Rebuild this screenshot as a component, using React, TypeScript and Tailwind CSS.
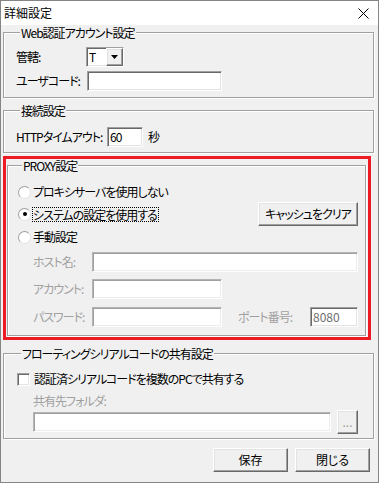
import React from "react"

const font = "[font-family:'Noto_Sans_CJK_JP',sans-serif] [font-feature-settings:'palt'] tracking-[-1px] whitespace-nowrap"

const sunken =
    "shrink-0 bg-white border border-t-[#a0a0a0] border-l-[#a0a0a0] border-b-white border-r-white shadow-[inset_1px_1px_0_#696969,inset_-1px_-1px_0_#e3e3e3]"

const sunkenOff =
    "shrink-0 bg-white border border-t-[#b4b4b4] border-l-[#b4b4b4] border-b-white border-r-white shadow-[inset_1px_1px_0_#a0a0a0,inset_-1px_-1px_0_#ececec]"

const raised =
    "shrink-0 bg-[#f0f0f0] border border-t-white border-l-white border-b-[#696969] border-r-[#696969] shadow-[inset_-1px_-1px_0_#a0a0a0,inset_1px_1px_0_#e3e3e3]"

function GroupBox({ title, className, children }: { title: string; className?: string; children: React.ReactNode }) {
    return (
        <div className={"flex flex-col border border-[#a0a0a0] shadow-[inset_1px_1px_0_#fff,1px_1px_0_#fff] " + (className ?? "")}>
            <span className="-mt-[7px] ml-[4px] w-fit px-[1px] bg-[#f0f0f0] leading-[14px]">{title}</span>
            {children}
        </div>
    )
}

function Radio({ checked }: { checked?: boolean }) {
    return (
        <span className="shrink-0 flex h-[13px] w-[13px] items-center justify-center rounded-full bg-white border border-[#a0a0a0] border-b-[#e3e3e3] border-r-[#e3e3e3]">
            {checked && <span className="h-[4px] w-[4px] rounded-full bg-black" />}
        </span>
    )
}

export default function App() {
    return (
        <div className={"w-[379px] h-[483px] flex flex-col bg-[#f0f0f0] border border-[#858585] text-[12px] text-black " + font}>
            {/* title bar */}
            <div className="h-[24px] flex items-center justify-between bg-white pl-[3px] pr-[9px]">
                <span className="leading-[14px] tracking-normal">詳細設定</span>
                <svg width="11" height="11" viewBox="0 0 11 11">
                    <path d="M0.5 0.5 L10.5 10.5 M10.5 0.5 L0.5 10.5" stroke="#000" strokeWidth="1" />
                </svg>
            </div>

            <div className="flex flex-col pl-[2px]">
                {/* Web auth */}
                <GroupBox title="Web認証アカウント設定" className="mt-[7px] w-[371px] pl-[12px] pb-[6px]">
                    <div className="mt-[7px] flex items-center h-[20px]">
                        <span className="w-[70px] shrink-0">管轄:</span>
                        <div className={"w-[38px] h-[20px] flex items-stretch " + sunken}>
                            <span className="flex-1 pl-[2px] leading-[18px]">T</span>
                            <span className={"w-[17px] flex items-center justify-center " + raised}>
                                <svg width="7" height="4" viewBox="0 0 7 4"><path d="M0 0 H7 L3.5 4 Z" fill="#000" /></svg>
                            </span>
                        </div>
                    </div>
                    <div className="mt-[4px] flex items-center h-[20px]">
                        <span className="w-[71px] shrink-0">ユーザコード:</span>
                        <div className={"w-[135px] h-[20px] " + sunken} />
                    </div>
                </GroupBox>

                {/* connection */}
                <GroupBox title="接続設定" className="mt-[12px] w-[371px] pl-[12px] pb-[5px]">
                    <div className="mt-[9px] flex items-center h-[20px]">
                        <span className="w-[91px] shrink-0">HTTPタイムアウト:</span>
                        <div className={"w-[36px] h-[20px] pl-[2px] leading-[18px] " + sunken}>60</div>
                        <span className="ml-[5px]">秒</span>
                    </div>
                </GroupBox>

                {/* proxy, highlighted */}
                <div className="mt-[3px] w-[368px] border-[3px] border-[#ed1c24] flex flex-col">
                    <GroupBox title="PROXY設定" className="mt-[6px] mb-[1px] ml-[1px] w-[359px] pl-[10px] pr-[7px] pb-[8px]">
                        <div className="mt-[9px] h-[20px] flex items-center gap-[2px]">
                            <Radio />
                            <span>プロキシサーバを使用しない</span>
                        </div>
                        <div className="h-[24px] flex items-center gap-[2px]">
                            <Radio checked />
                            <span className="leading-[13px] pr-[1px] outline outline-1 outline-dotted outline-black">システムの設定を使用する</span>
                            <button className={"ml-auto w-[100px] h-[24px] " + raised}>キャッシュをクリア</button>
                        </div>
                        <div className="mt-[1px] h-[20px] flex items-center gap-[2px]">
                            <Radio />
                            <span>手動設定</span>
                        </div>
                        <div className="mt-[5px] h-[20px] flex items-center pl-[15px] text-[#a0a0a0]">
                            <span className="w-[59px] shrink-0">ホスト名:</span>
                            <div className={"w-[266px] h-[20px] " + sunkenOff} />
                        </div>
                        <div className="mt-[7px] h-[20px] flex items-center pl-[15px] text-[#a0a0a0]">
                            <span className="w-[59px] shrink-0">アカウント:</span>
                            <div className={"w-[130px] h-[20px] " + sunkenOff} />
                        </div>
                        <div className="mt-[8px] h-[20px] flex items-center pl-[15px] text-[#a0a0a0]">
                            <span className="w-[59px] shrink-0">パスワード:</span>
                            <div className={"w-[130px] h-[20px] " + sunkenOff} />
                            <span className="ml-[16px] w-[72px] shrink-0">ポート番号:</span>
                            <div className={"w-[48px] h-[20px] pl-[2px] leading-[18px] tracking-normal text-[#6d6d6d] " + sunken}>8080</div>
                        </div>
                    </GroupBox>
                </div>

                {/* floating serial */}
                <GroupBox title="フローティングシリアルコードの共有設定" className="mt-[13px] w-[371px] pl-[13px] pb-[4px]">
                    <div className="mt-[8px] h-[20px] flex items-center gap-[4px]">
                        <span className={"w-[13px] h-[13px] " + sunken} />
                        <span>認証済シリアルコードを複数のPCで共有する</span>
                    </div>
                    <div className="mt-[3px] h-[18px] flex items-center pl-[16px] text-[#a0a0a0]">共有先フォルダ:</div>
                    <div className="h-[24px] flex items-center pl-[16px]">
                        <div className={"w-[298px] h-[20px] " + sunkenOff} />
                        <button className={"ml-[6px] w-[21px] h-[24px] text-[#a0a0a0] leading-[10px] tracking-normal " + raised}>...</button>
                    </div>
                </GroupBox>

                <div className="mt-[9px] flex justify-end gap-[7px] pr-[8px]">
                    <button className={"w-[75px] h-[24px] tracking-normal " + raised}>保存</button>
                    <button className={"w-[75px] h-[24px] tracking-normal " + raised}>閉じる</button>
                </div>
            </div>
        </div>
    )
}
